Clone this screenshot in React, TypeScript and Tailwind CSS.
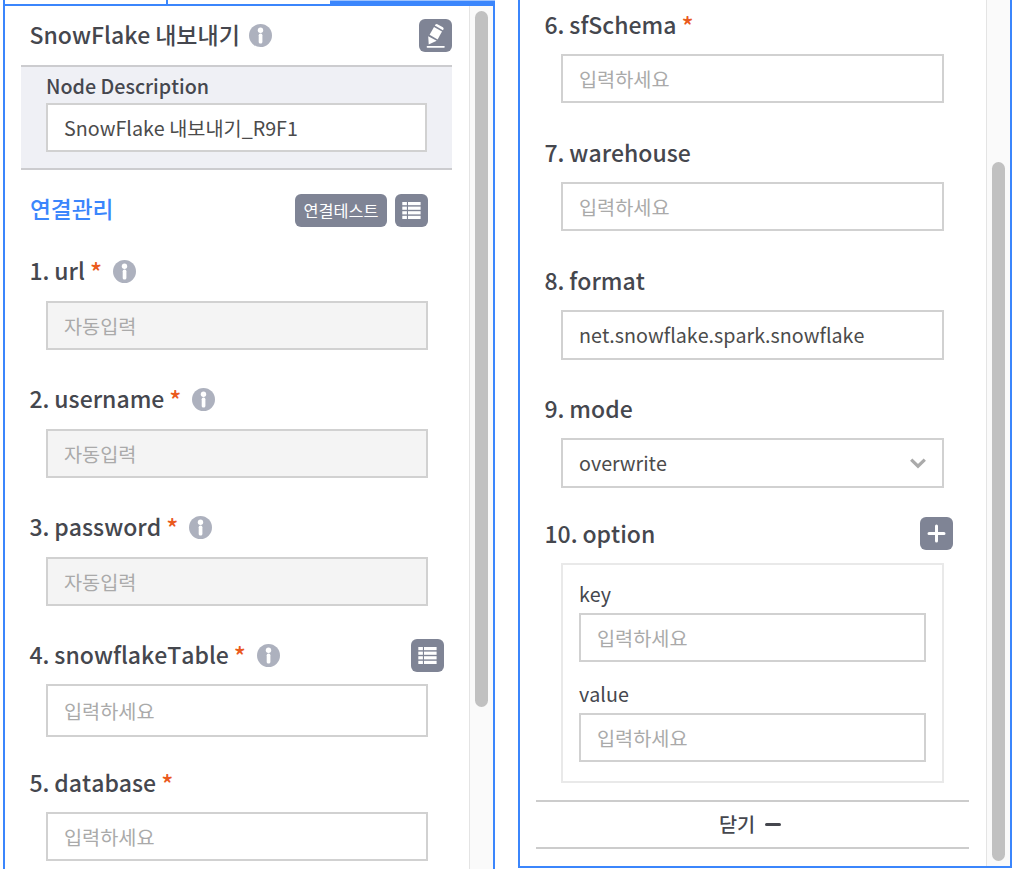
import React from "react";

type BoxProps = { text: string; tone?: "placeholder" | "value" | "disabled"; className?: string; children?: React.ReactNode };

function Box({ text, tone = "placeholder", className = "h-[49px]", children }: BoxProps) {
  const tones = {
    placeholder: "bg-white text-[#aaaaaa]",
    value: "bg-white text-[#4b4b4b]",
    disabled: "bg-[#f4f4f4] text-[#aaaaaa]",
  };
  return (
    <div className={`flex items-center justify-between border-2 border-[#d1d1d1] px-4 text-[19.7px] leading-none ${tones[tone]} ${className}`}>
      <span className="whitespace-nowrap">{text}</span>
      {children}
    </div>
  );
}

function InfoIcon() {
  return (
    <svg className="size-[23px] shrink-0" viewBox="0 0 23 23">
      <circle cx="11.5" cy="11.5" r="11.5" fill="#adb1be" />
      <circle cx="11.5" cy="6.2" r="2.7" fill="#fff" />
      <rect x="9.7" y="9.6" width="3.7" height="10" rx="1.6" fill="#fff" />
    </svg>
  );
}

function IconButton({ children }: { children: React.ReactNode }) {
  return <button className="flex size-[33px] shrink-0 items-center justify-center rounded-[6px] bg-[#7f8495]">{children}</button>;
}

function ListIcon() {
  return (
    <svg className="h-[17px] w-[19px]" viewBox="0 0 19 17" fill="#fff">
      {[0, 4.6, 9.2, 13.8].map((y) => (
        <g key={y}>
          <rect x="0.3" y={y} width="4.6" height="3.2" />
          <rect x="6" y={y} width="12.6" height="3.2" />
        </g>
      ))}
    </svg>
  );
}

function PencilIcon() {
  return (
    <svg className="size-[33px]" viewBox="0 0 33 33" fill="#fff">
      <path d="M9.7 25.6 L9.2 17.2 L17.7 21.8 Z" />
      <path d="M10.6 15.8 L15 8 L23 12.6 L18.6 20.4 Z" />
      <path d="M15.8 6.6 L16.5 5.5 Q17.2 4.6 18.4 5.2 L23.9 8.3 Q25 9.1 24.5 10.2 L23.9 11.3 Z" />
      <rect x="7.7" y="26.9" width="18" height="1.8" rx="0.6" />
    </svg>
  );
}

type LabelProps = { text: string; required?: boolean; info?: boolean };

function Label({ text, required, info }: LabelProps) {
  return (
    <div className="-ml-[0.5px] flex h-7 items-center whitespace-nowrap text-[23px] leading-7 font-medium text-[#45474e]">
      <span className="mb-0.5 [word-spacing:-0.3px]">{text}</span>
      {required && <span className="ml-[5px] w-[11px] text-[25px] text-[#ea5a1d]">*</span>}
      {info && (
        <span className="ml-3">
          <InfoIcon />
        </span>
      )}
    </div>
  );
}

type FieldProps = LabelProps & BoxProps & { label: string; action?: React.ReactNode };

function Field({ label, required, info, action, className, ...box }: Omit<FieldProps, "text"> & { text: string }) {
  return (
    <div className="h-32">
      <div className="flex h-7 items-center justify-between">
        <Label text={label} required={required} info={info} />
        {action}
      </div>
      <div className="pl-4">
        <Box {...box} className={className ?? "mt-4 h-[49px]"} />
      </div>
    </div>
  );
}

function LeftPanel() {
  return (
    <section className="ml-[3px] flex h-[869px] w-[492px] flex-col overflow-hidden">
      <div className="flex h-1 shrink-0">
        <div className="w-[163px] border-l-2 border-[#3b86fc]" />
        <div className="w-[164px] border-l-2 border-[#3b86fc]" />
        <div className="flex-1 border-t border-[#9ec3ff] bg-[#3b86fc]" />
      </div>
      <div className="flex min-h-0 flex-1 border-x-2 border-t-2 border-[#3b86fc]">
        <div className="w-[464px] shrink-0 pl-4">
          <header className="flex h-[58px] w-[431px] items-center justify-between pl-[9px]">
            <div className="-ml-[0.5px] flex items-center">
              <h1 className="mb-0.5 whitespace-nowrap text-[23px] leading-7 font-medium text-[#45474e] [word-spacing:-0.4px]">SnowFlake 내보내기</h1>
              <span className="ml-[9.5px]">
                <InfoIcon />
              </span>
            </div>
            <IconButton>
              <PencilIcon />
            </IconButton>
          </header>
          <div className="mt-px h-[105px] w-[431px] border-y-2 border-[#cccccf] bg-[#eff0f5] pr-[25px] pl-[25px]">
            <div className="flex h-9 items-center pt-0.5 text-[19.7px] leading-7 font-medium text-[#45474e]">Node Description</div>
            <Box text="SnowFlake 내보내기_R9F1" tone="value" className="h-[49px]" />
          </div>
          <div className="mt-6 flex h-[33px] w-[407px] items-center pl-[9px]">
            <h2 className="mb-[3px] flex-1 text-[22.7px] leading-7 font-medium text-[#3b86fc]">연결관리</h2>
            <button className="h-[33px] w-[92px] rounded-[6px] bg-[#7f8495] text-[16.3px] leading-none whitespace-nowrap text-white">연결테스트</button>
            <span className="ml-2">
              <IconButton>
                <ListIcon />
              </IconButton>
            </span>
          </div>
          <div className="mt-[30px] w-[407px] pl-[9px]">
            <Field label="1. url" required info text="자동입력" tone="disabled" />
            <Field label="2. username" required info text="자동입력" tone="disabled" />
            <Field label="3. password" required info text="자동입력" tone="disabled" />
            <Field
              label="4. snowflakeTable"
              required
              info
              text="입력하세요"
              className="mt-[15px] h-[53px]"
              action={
                <span className="-mr-4">
                  <IconButton>
                    <ListIcon />
                  </IconButton>
                </span>
              }
            />
            <Field label="5. database" required text="입력하세요" className="mt-[15px] h-[49px]" />
          </div>
        </div>
        <div className="flex flex-1 border-l border-[#e4e4e4] bg-[#fafafa] pt-[5px] pl-[5px]">
          <div className="h-[696px] w-[13px] rounded-full bg-[#c1c1c1]" />
        </div>
      </div>
    </section>
  );
}

function RightPanel() {
  return (
    <section className="ml-[23px] flex h-[868px] w-[494px] border-r-2 border-b-2 border-l-2 border-[#3b86fc]">
      <div className="w-[466px] shrink-0">
        <div className="w-[424px] pt-[11px] pl-[25px]">
          <Field label="6. sfSchema" required text="입력하세요" className="mt-[15px] h-[49px]" />
          <Field label="7. warehouse" text="입력하세요" className="mt-[15px] h-[49px]" />
          <Field label="8. format" text="net.snowflake.spark.snowflake" tone="value" className="mt-[15px] h-[50px]" />
          <Field label="9. mode" text="overwrite" tone="value" className="mt-[15px] h-[50px]">
            <svg className="h-[11px] w-4" viewBox="0 0 16 11" fill="none" stroke="#aaaaaa" strokeWidth="3.2">
              <path d="M1.2 1.6 8 8.2l6.8-6.6" />
            </svg>
          </Field>
        </div>
        <div className="-mt-[6px] flex h-[33px] w-[433px] items-center justify-between pl-[25px]">
          <Label text="10. option" />
          <IconButton>
            <svg className="size-[19px]" viewBox="0 0 19 19" fill="none" stroke="#fff" strokeWidth="3" strokeLinecap="round">
              <path d="M9.5 2v15M2 9.5h15" />
            </svg>
          </IconButton>
        </div>
        <div className="mt-[13px] ml-[41px] h-[220px] w-[383px] border-2 border-[#e9e9e9] px-4">
          <div className="flex h-12 items-end pb-[5px] text-[19.7px] leading-7 text-[#45474e]">key</div>
          <Box text="입력하세요" />
          <div className="flex h-[51px] items-end pb-[5px] text-[19.7px] leading-7 text-[#45474e]">value</div>
          <Box text="입력하세요" />
        </div>
        <button className="mt-[17px] ml-4 flex h-[49px] w-[433px] items-center justify-center border-y-2 border-[#cccccc] pr-[5px] text-[19.7px] leading-none font-medium text-[#45474e]">
          <span className="mb-0.5">닫기</span>
          <span className="ml-2.5 h-[3px] w-4 rounded-full bg-[#45474e]" />
        </button>
      </div>
      <div className="flex flex-1 border-l border-[#e4e4e4] bg-[#fafafa] pt-[162px] pl-[5px]">
        <div className="h-[699px] w-[13px] rounded-full bg-[#c1c1c1]" />
      </div>
    </section>
  );
}

export default function App() {
  return (
    <main className="flex h-[870px] w-[1025px] overflow-hidden bg-white font-['Noto_Sans_CJK_KR','Noto_Sans',sans-serif] [font-kerning:none] [font-variant-ligatures:none]">
      <LeftPanel />
      <RightPanel />
    </main>
  );
}
